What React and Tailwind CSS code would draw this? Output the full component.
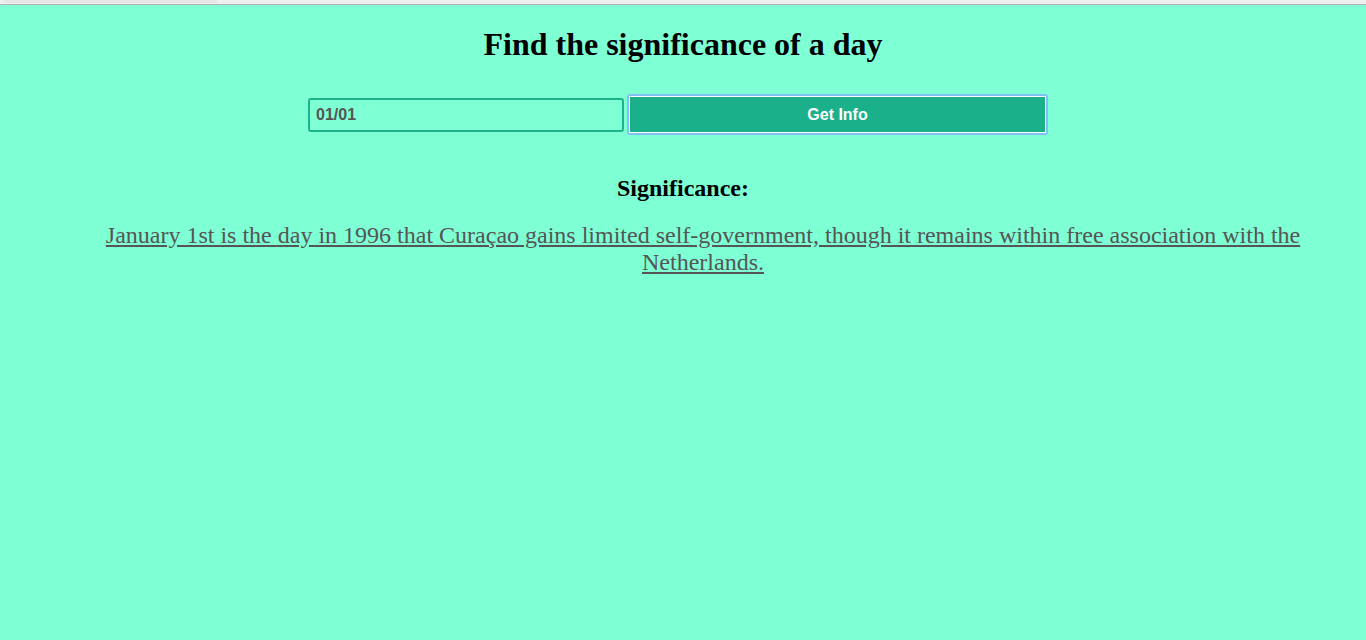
import React, { useState } from 'react';

const facts = {
    '01/01': 'January 1st is the day in 1996 that Curaçao gains limited self-government, though it remains within free association with the Netherlands.',
};

export default function App() {
    const [date, setDate] = useState('01/01');
    const [result, setResult] = useState(facts['01/01']);

    return (
        <div className="min-h-screen bg-[#7fffd4] font-['Liberation_Serif',serif]">
            {/* browser chrome strip */}
            <div className="h-[4px] bg-[#efefef] pl-[4px]">
                <div className="h-[3px] w-[213px] bg-[#e6e6e6]" />
            </div>
            <div className="h-px bg-[#b4b4b4]" />

            <h1 className="pt-[21px] text-center text-[32px] font-bold leading-[37px] text-black">
                Find the significance of a day
            </h1>

            <div className="mt-[31px] flex items-center justify-center gap-[3px] pr-[10px]">
                <input
                    value={date}
                    onChange={(e) => setDate(e.target.value)}
                    className="h-[34px] w-[316px] rounded-[3px] border-2 border-[#1db38c] bg-[#7fffd4] px-[6px] font-['Liberation_Sans',sans-serif] text-[16px] font-bold text-[#555] outline-none"
                />
                <button
                    onClick={() => setResult(facts[date] || '')}
                    className="h-[41px] w-[421px] rounded-[3px] border-2 border-[#80c0f4]"
                >
                    <div className="flex h-full w-full items-center justify-center border border-white bg-[#1ab08a] font-['Liberation_Sans',sans-serif] text-[16px] font-bold text-white">
                        Get Info
                    </div>
                </button>
            </div>

            <h3 className="mt-[40px] text-center text-[24px] font-bold leading-[27px] text-black">
                Significance:
            </h3>
            <p className="mt-[20px] pl-[80px] pr-[40px] text-center text-[24px] leading-[27px] text-[#555] underline">
                {result}
            </p>
        </div>
    );
}
